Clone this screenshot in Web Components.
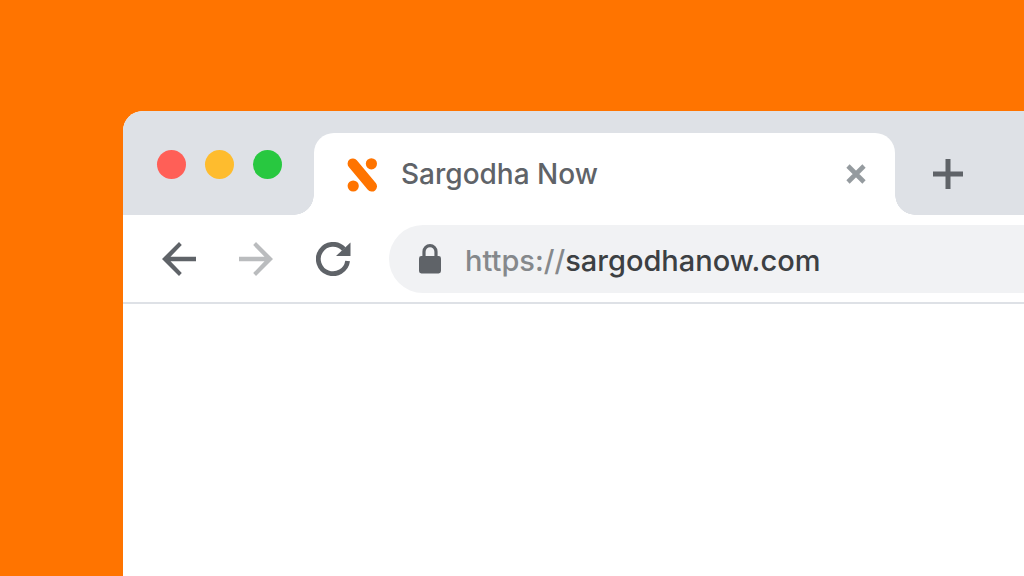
<!DOCTYPE html>
<html lang="en">
<head>
<meta charset="utf-8">
<meta name="viewport" content="width=device-width, initial-scale=1">
<title>Sargodha Now</title>
<style>
  html, body { margin: 0; min-height: 100%; }
  body {
    min-height: 100vh;
    display: flex;
    background: #ff7400;
    font-family: Inter, "Liberation Sans", sans-serif;
    font-size: 29px;
    font-weight: 500;
    --ink: #5f6368;
    --strip: #dee1e6;
    --field: #f1f2f4;
  }
</style>
</head>
<body>
<browser-window>
  <tab-strip slot="strip">
    <window-controls slot="controls"></window-controls>
    <browser-tab>Sargodha Now</browser-tab>
  </tab-strip>
  <nav-toolbar slot="toolbar">
    <address-bar scheme="https://" host="sargodhanow.com"></address-bar>
  </nav-toolbar>
</browser-window>

<script>
const reset = `
  button { display: block; flex: none; padding: 0; border: 0; background: none; color: inherit; font: inherit; cursor: pointer; }
  svg { display: block; }
`;

function define(name, html, setup) {
  const template = document.createElement('template');
  template.innerHTML = html;
  customElements.define(name, class extends HTMLElement {
    constructor() {
      super();
      this.attachShadow({ mode: 'open' }).append(template.content.cloneNode(true));
    }
    connectedCallback() {
      if (setup) setup(this);
    }
  });
}

define('browser-window', `
  <style>
    :host { display: flex; flex: 1; min-width: 0; padding: 111px 0 0 123px; }
    .frame { flex: 1; min-width: 0; display: flex; flex-direction: column; background: #fff; border-top-left-radius: 20px; overflow: hidden; }
    main { flex: 1; }
  </style>
  <div class="frame">
    <slot name="strip"></slot>
    <slot name="toolbar"></slot>
    <main aria-label="Page"></main>
  </div>
`);

define('window-controls', `
  <style>
    ${reset}
    :host { display: flex; gap: 19px; }
    button { width: 29px; height: 29px; border-radius: 50%; }
    .close { background: #ff5f57; }
    .minimize { background: #febc2e; }
    .zoom { background: #28c840; }
  </style>
  <button class="close" aria-label="Close window"></button>
  <button class="minimize" aria-label="Minimize window"></button>
  <button class="zoom" aria-label="Zoom window"></button>
`);

define('tab-strip', `
  <style>
    ${reset}
    :host { display: flex; align-items: center; padding: 22px 24px 0 34px; background: var(--strip); color: var(--ink); }
    .controls { align-self: flex-start; padding-top: 17px; padding-right: 32px; }
    .add { margin-left: 38px; }
  </style>
  <div class="controls"><slot name="controls"></slot></div>
  <slot></slot>
  <button class="add" aria-label="New tab">
    <svg width="30" height="30" viewBox="0 0 30 30" fill="none" stroke="currentColor" stroke-width="5"><path d="M15 0V30M0 15H30"/></svg>
  </button>
`);

define('browser-tab', `
  <style>
    ${reset}
    :host { position: relative; display: flex; align-items: center; flex: 0 1 581px; box-sizing: border-box; min-width: 0; height: 82px; padding: 0 29px 0 33px; background: #fff; border-radius: 20px 20px 0 0; }
    :host::before, :host::after { content: ""; position: absolute; bottom: 0; width: 20px; height: 20px; }
    :host::before { right: 100%; background: radial-gradient(circle at 0 0, transparent 19.5px, #fff 20px); }
    :host::after { left: 100%; background: radial-gradient(circle at 100% 0, transparent 19.5px, #fff 20px); }
    .logo { flex: none; margin-right: 24px; color: #ff7400; }
    .title { flex: 1; min-width: 0; white-space: nowrap; overflow: hidden; text-overflow: ellipsis; font-size: 28px; line-height: 40px; }
    .close { color: #959b9f; }
  </style>
  <svg class="logo" width="30" height="36" viewBox="0 -2 30 36" aria-hidden="true">
    <path d="M5.8 5.6L24.8 28.4" fill="none" stroke="currentColor" stroke-width="10.4" stroke-linecap="round"/>
    <circle cx="24.4" cy="5.8" r="5.6" fill="currentColor"/>
    <circle cx="6.2" cy="28" r="5.6" fill="currentColor"/>
  </svg>
  <span class="title"><slot></slot></span>
  <button class="close" aria-label="Close tab">
    <svg width="20" height="20" viewBox="0 0 20 20" fill="none" stroke="currentColor" stroke-width="4.6"><path d="M2 2L18 18M18 2L2 18"/></svg>
  </button>
`);

define('nav-toolbar', `
  <style>
    ${reset}
    :host { display: flex; align-items: center; gap: 43px; padding: 10px 0 9px 39px; border-bottom: 2px solid var(--strip); color: var(--ink); background: #fff; }
    .forward { color: #babcbe; }
    slot { display: block; flex: 1; min-width: 0; margin-left: -5px; }
  </style>
  <button aria-label="Back">
    <svg width="34" height="34" viewBox="0 0 34 34" fill="currentColor"><path d="M34 14.7H8.5L19.8 3.1L17 0L0 17L17 34L19.8 31L8.5 19.3H34Z"/></svg>
  </button>
  <button class="forward" aria-label="Forward">
    <svg width="34" height="34" viewBox="0 0 34 34" fill="currentColor"><path d="M0 14.7H25.5L14.2 3.1L17 0L34 17L17 34L14.2 31L25.5 19.3H0Z"/></svg>
  </button>
  <button aria-label="Reload">
    <svg width="35" height="34" viewBox="0 0 35 34"><path d="M31.6 19A14.7 14.7 0 1 1 27.8 7" fill="none" stroke="currentColor" stroke-width="4.8"/><path d="M20 14H34.5V0.5Z" fill="currentColor"/></svg>
  </button>
  <slot></slot>
`);

define('address-bar', `
  <style>
    :host { display: flex; align-items: center; box-sizing: border-box; height: 68px; padding: 4px 0 0 30px; border-radius: 34px 0 0 34px; background: var(--field); }
    svg { display: block; flex: none; margin-right: 24px; }
    label { color: #85888b; line-height: 40px; }
    input { flex: 1; min-width: 0; height: 40px; margin: 0; padding: 0; border: 0; outline: 0; background: none; color: #3c4043; font: inherit; line-height: 40px; }
  </style>
  <svg width="22" height="34" viewBox="0 0 22 34" aria-hidden="true">
    <path d="M5 13V7.7A6 6 0 0 1 17 7.7V13" fill="none" stroke="currentColor" stroke-width="3.2"/>
    <rect x="0" y="12" width="22" height="17.5" rx="2.4" fill="currentColor"/>
  </svg>
  <label for="url"></label><input id="url" type="text" spellcheck="false">
`, host => {
  host.shadowRoot.querySelector('label').textContent = host.getAttribute('scheme');
  host.shadowRoot.querySelector('input').value = host.getAttribute('host');
});
</script>
</body>
</html>
